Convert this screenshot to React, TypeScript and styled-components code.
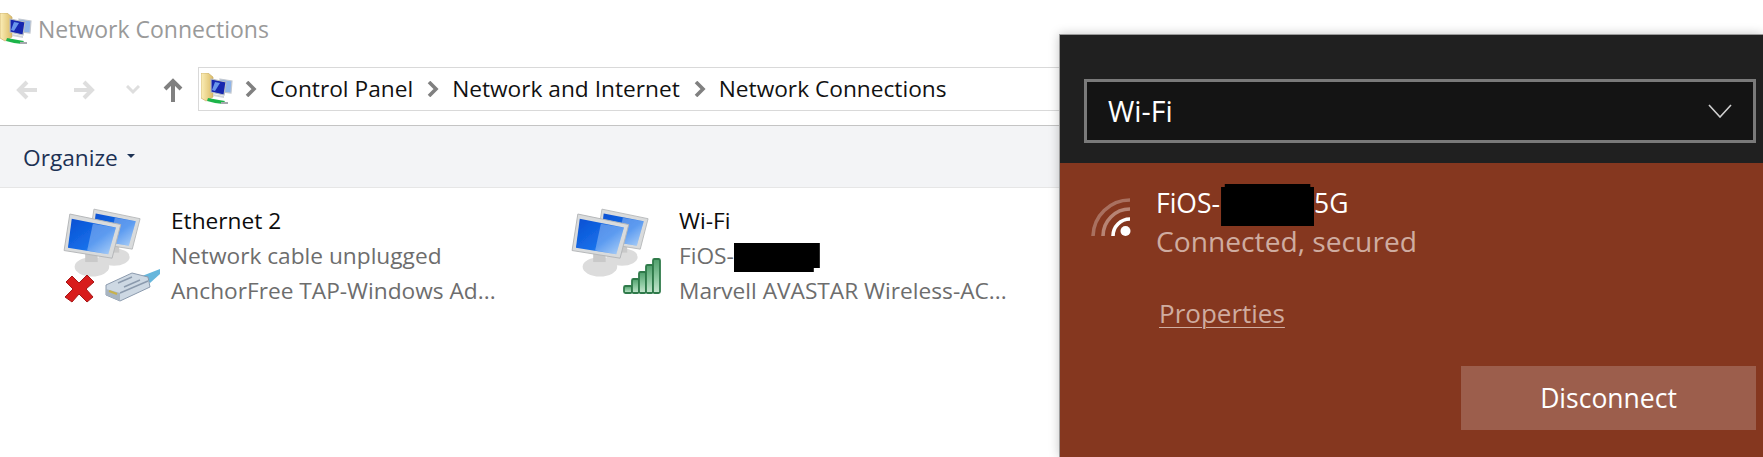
import React from "react";
import styled, { createGlobalStyle } from "styled-components";

const Global = createGlobalStyle`
  html, body { margin: 0; padding: 0; background: #fff; overflow: hidden; }
  #root { width: 1763px; height: 457px; }
`;

const Page = styled.div`
  position: relative;
  width: 1763px;
  height: 457px;
  overflow: hidden;
  background: #fff;
  font-family: "Open Sans", "Noto Sans", sans-serif;
`;

const TitleRow = styled.div`
  display: flex;
  align-items: center;
  height: 57px;
  padding-bottom: 4px;
  color: #9a9a9a;
  font-size: 23px;
  gap: 6px;
`;

const NavRow = styled.div`
  display: flex;
  align-items: center;
  height: 64px;
  border-bottom: 1px solid #c4c4c4;
`;

const NavIcons = styled.div`
  display: flex;
  align-items: center;
  width: 198px;
  flex: none;
  padding: 0 0 7px 15px;
  box-sizing: border-box;
`;

const AddressBar = styled.div`
  display: flex;
  align-items: center;
  height: 44px;
  width: 900px;
  box-sizing: border-box;
  border: 1px solid #d9d9d9;
  padding-left: 2px;
  margin-bottom: 9px;
  color: #111;
  font-size: 22.7px;
`;

const Crumb = styled.span`
  margin: 0 14px 0 13px;
  white-space: nowrap;
`;

const Toolbar = styled.div`
  display: flex;
  align-items: center;
  height: 61px;
  padding: 1px 0 0 23px;
  box-sizing: content-box;
  height: 60px;
  background: #f3f4f6;
  border-bottom: 1px solid #e6e6e6;
  color: #1c3154;
  font-size: 22.7px;
  gap: 9px;
`;

const Caret = styled.span`
  width: 0;
  height: 0;
  margin-top: -3px;
  border-left: 4px solid transparent;
  border-right: 4px solid transparent;
  border-top: 4px solid #1c3154;
`;

const Items = styled.div`
  display: grid;
  grid-template-columns: 508px 508px;
  padding: 15px 0 0 60px;
`;

const Item = styled.div`
  display: flex;
`;

const BigIconBox = styled.div`
  width: 111px;
  height: 110px;
  flex: none;
  margin-top: -2px;
`;

const ItemText = styled.div`
  display: flex;
  flex-direction: column;
`;

const ItemLine = styled.div<{ $primary?: boolean }>`
  height: 35px;
  line-height: 35px;
  font-size: 22.7px;
  white-space: nowrap;
  color: ${(p) => (p.$primary ? "#0c0c0c" : "#6d6d6d")};
`;

const Redaction = styled.span<{ $w: number; $h: number; $clip: string; $v: number; $ml?: number }>`
  display: inline-block;
  width: ${(p) => p.$w}px;
  height: ${(p) => p.$h}px;
  margin-left: ${(p) => p.$ml ?? 0}px;
  vertical-align: ${(p) => p.$v}px;
  background: #000;
  clip-path: ${(p) => p.$clip};
`;

const Flyout = styled.aside`
  position: absolute;
  left: 1059px;
  top: 34px;
  width: 704px;
  height: 423px;
  display: flex;
  flex-direction: column;
  border-left: 1px solid #9a9a9a;
  border-top: 1px solid #9a9a9a;
  box-sizing: border-box;
  box-shadow: 0 0 10px rgba(0, 0, 0, 0.22);
  background: #85371f;
  color: #fff;
`;

const FlyoutHead = styled.div`
  height: 128px;
  flex: none;
  background: #202020;
  padding: 44px 7px 0 24px;
  box-sizing: border-box;
`;

const SelectBox = styled.div`
  display: flex;
  align-items: center;
  justify-content: space-between;
  height: 64px;
  box-sizing: border-box;
  border: 3px solid #7a7a7a;
  background: #141414;
  padding: 0 21px 0 21px;
  font-size: 28.5px;
`;

const Network = styled.div`
  display: flex;
  padding: 19px 0 0 31px;
`;

const SignalBox = styled.div`
  flex: none;
  margin-top: 16px;
  display: flex;
`;

const NetworkText = styled.div`
  display: flex;
  flex-direction: column;
  margin-left: 23px;
`;

const NetworkName = styled.div`
  height: 39px;
  line-height: 42px;
  font-size: 26.5px;
  white-space: nowrap;
`;

const NetworkStatus = styled.div`
  height: 41px;
  line-height: 40px;
  font-size: 28.2px;
  color: #cfaca0;
  white-space: nowrap;
`;

const PropertiesLink = styled.a`
  align-self: flex-start;
  margin: 34px 0 0 99px;
  font-size: 26px;
  line-height: 34px;
  color: #cfaca0;
  text-decoration: underline;
  text-underline-offset: 4px;
  text-decoration-thickness: 1px;
`;

const Footer = styled.div`
  display: flex;
  justify-content: flex-end;
  padding: 36px 7px 0 0;
`;

const DisconnectButton = styled.div`
  display: flex;
  align-items: center;
  justify-content: center;
  width: 295px;
  height: 64px;
  background: #9c5e4c;
  font-size: 26.5px;
`;

const NavSvg = styled.svg<{ $ml?: number }>`
  flex: none;
  display: block;
  margin-left: ${(p) => p.$ml ?? 0}px;
`;

const Arrow = ({ dir, color, ml }: { dir: "l" | "r"; color: string; ml: number }) => (
  <NavSvg $ml={ml} width="23" height="22" viewBox="0 0 23 22">
    <path
      d={dir === "l" ? "M22 11H4M12 3l-8 8 8 8" : "M1 11h18M11 3l8 8-8 8"}
      fill="none"
      stroke={color}
      strokeWidth="4"
    />
  </NavSvg>
);

const Chevron = () => (
  <NavSvg width="12" height="16" viewBox="0 0 12 16">
    <path d="M2 1l7 7-7 7" fill="none" stroke="#808080" strokeWidth="3.6" />
  </NavSvg>
);

const FolderNet = ({ id }: { id: string }) => (
  <NavSvg width="32" height="32" viewBox="0 0 32 32">
    <defs>
      <linearGradient id={id} x1="0" x2="1" y1="0" y2="0">
        <stop offset="0" stopColor="#fbeeb8" />
        <stop offset="1" stopColor="#dcbc66" />
      </linearGradient>
      <filter id={`${id}b`} x="-10%" y="-10%" width="120%" height="120%">
        <feGaussianBlur stdDeviation=".3" />
      </filter>
    </defs>
    <g filter={`url(#${id}b)`}>
      <path d="M0 0h7l5 4v20l-7 4-5-3z" fill={`url(#${id})`} stroke="#c9ae68" strokeWidth=".7" />
      <path d="M19 6l12 2-1 12-9-1z" fill="#8fb5ea" stroke="#c4c9d0" strokeWidth="1.2" />
      <path d="M10 6l15 3-2 13-13-3z" fill="#1427b0" stroke="#b8bdc5" strokeWidth="1.2" />
      <path d="M14 9l5 1-5 8-3-1z" fill="#6a96ec" />
      <path d="M12 21l11 2v2l-11-2z" fill="#cfd3d8" />
      <path d="M7 25l11 2 6 1-2 3-8-1-8-2z" fill="#1fb44a" />
      <path d="M20 29l7 0v2l-7 0z" fill="#a5a9ae" />
    </g>
  </NavSvg>
);

const Monitor = ({ id, x, y, k }: { id: string; x: number; y: number; k: number }) => (
  <g transform={`translate(${x} ${y}) scale(${k})`}>
    <ellipse cx="27" cy="54" rx="18" ry="10" fill="#dcdcdc" />
    <rect x="20" y="38" width="13" height="11" fill="#c9c9c9" />
    <path d="M4 -1 L57 10 L48 45 L-2 37 Z" fill="#d9dbdc" stroke="#b4b6b8" />
    <path d="M6 4 L52 13 L44 41 L2 34 Z" fill={`url(#${id})`} />
    <path d="M28 9 L52 13 L44 41 L22 37 Z" fill="#fff" opacity=".3" />
  </g>
);

const BigMonitors = ({ id }: { id: string }) => (
  <>
    <defs>
      <linearGradient id={id} x1="0" x2="1" y1="0" y2="1">
        <stop offset="0" stopColor="#0a4fd2" />
        <stop offset="0.6" stopColor="#1670ea" />
        <stop offset="1" stopColor="#8fc0f5" />
      </linearGradient>
      <filter id={`${id}b`} x="-10%" y="-10%" width="120%" height="120%">
        <feGaussianBlur stdDeviation=".5" />
      </filter>
    </defs>
    <g filter={`url(#${id}b)`}>
      <Monitor id={id} x={30.5} y={9} k={0.87} />
      <Monitor id={id} x={6} y={14} k={0.96} />
    </g>
  </>
);

const EthernetIcon = () => (
  <NavSvg width="111" height="110" viewBox="0 0 111 110">
    <BigMonitors id="g1" />
    <g filter="url(#g1b)">
      <path
        d="M8 76 L15 83 L23 75 L30 82 L22 89 L29 97 L23 102 L15 94 L8 102 L1 97 L9 89 L2 82 Z"
        transform="translate(4 -1)"
        fill="#d81d1d"
        stroke="#a61616"
      />
      <path d="M82 75 L100 68 L100 73 L90 82 Z" fill="#66b6dc" />
      <path d="M46 84 L72 72 L88 76 L90 86 L60 100 L46 94 Z" fill="#cdd8e3" stroke="#8b9aad" />
      <path d="M46 88 L60 92 L60 100 L46 94 Z" fill="#a7b4c1" />
      <path d="M49 90 L57 93" stroke="#c9b24c" strokeWidth="2" />
      <path d="M58 82 L72 76 M64 86 L80 79 M60 92 L88 80" stroke="#8b9aad" strokeWidth="1.4" />
    </g>
  </NavSvg>
);

const WifiIcon = () => (
  <NavSvg width="111" height="110" viewBox="0 0 111 110">
    <defs>
      <linearGradient id="bar" x1="0" x2="0" y1="0" y2="1">
        <stop offset="0" stopColor="#4f9f6c" />
        <stop offset="0.55" stopColor="#8cc9a0" />
        <stop offset="1" stopColor="#c6e6cf" />
      </linearGradient>
    </defs>
    <BigMonitors id="g2" />
    <g stroke="#2f7a4a" strokeWidth="1.8" fill="url(#bar)">
      <rect x="56" y="85" width="8" height="7" rx="1.5" />
      <rect x="64" y="78" width="7" height="14" rx="1.5" />
      <rect x="71" y="71" width="7" height="21" rx="1.5" />
      <rect x="78" y="64" width="7" height="28" rx="1.5" />
      <rect x="85" y="58" width="7" height="34" rx="1.5" />
    </g>
  </NavSvg>
);

const SignalIcon = () => (
  <NavSvg width="42" height="40" viewBox="0 0 42 40">
    <g fill="none" strokeWidth="3.6">
      <path d="M2 38A37 37 0 0 1 39 2" stroke="#a9705f" />
      <path d="M12 38A27 27 0 0 1 39 11" stroke="#b78474" />
      <path d="M22 38A17 17 0 0 1 39 21" stroke="#fff" />
    </g>
    <circle cx="34.5" cy="33" r="5" fill="#fff" />
  </NavSvg>
);

export default function App() {
  return (
    <Page>
      <Global />
      <TitleRow>
        <FolderNet id="f1" />
        <span>Network Connections</span>
      </TitleRow>
      <NavRow>
        <NavIcons>
          <Arrow dir="l" color="#dedede" ml={0} />
          <Arrow dir="r" color="#dedede" ml={35} />
          <NavSvg $ml={30} width="14" height="10" viewBox="0 0 14 10">
            <path d="M1 1l6 6 6-6" fill="none" stroke="#dedede" strokeWidth="3" />
          </NavSvg>
          <NavSvg $ml={23} width="20" height="24" viewBox="0 0 20 24">
            <path d="M10 24V4M2 11l8-8 8 8" fill="none" stroke="#808080" strokeWidth="4" />
          </NavSvg>
        </NavIcons>
        <AddressBar>
          <FolderNet id="f2" />
          <NavSvg $ml={12} width="12" height="16" viewBox="0 0 12 16">
            <path d="M2 1l7 7-7 7" fill="none" stroke="#808080" strokeWidth="3.6" />
          </NavSvg>
          <Crumb>Control Panel</Crumb>
          <Chevron />
          <Crumb>Network and Internet</Crumb>
          <Chevron />
          <Crumb>Network Connections</Crumb>
        </AddressBar>
      </NavRow>
      <Toolbar>
        <span>Organize</span>
        <Caret />
      </Toolbar>
      <Items>
        <Item>
          <BigIconBox>
            <EthernetIcon />
          </BigIconBox>
          <ItemText>
            <ItemLine $primary>Ethernet 2</ItemLine>
            <ItemLine>Network cable unplugged</ItemLine>
            <ItemLine>AnchorFree TAP-Windows Ad...</ItemLine>
          </ItemText>
        </Item>
        <Item>
          <BigIconBox>
            <WifiIcon />
          </BigIconBox>
          <ItemText>
            <ItemLine $primary>Wi-Fi</ItemLine>
            <ItemLine>
              FiOS-
              <Redaction
                $w={86}
                $h={29}
                $v={-8}
                $clip="polygon(0 0, 100% 0, 100% 86%, 93% 86%, 93% 100%, 0 100%)"
              />
            </ItemLine>
            <ItemLine>Marvell AVASTAR Wireless-AC...</ItemLine>
          </ItemText>
        </Item>
      </Items>
      <Flyout>
        <FlyoutHead>
          <SelectBox>
            <span>Wi-Fi</span>
            <svg width="24" height="14" viewBox="0 0 24 14">
              <path d="M1 1l11 12L23 1" fill="none" stroke="#d0d0d0" strokeWidth="1.6" />
            </svg>
          </SelectBox>
        </FlyoutHead>
        <Network>
          <SignalBox>
            <SignalIcon />
          </SignalBox>
          <NetworkText>
            <NetworkName>
              FiOS-
              <Redaction
                $w={93}
                $h={42}
                $v={-13}
                $ml={1}
                $clip="polygon(4% 0, 96% 0, 96% 7%, 100% 7%, 100% 100%, 0 100%, 0 7%, 4% 7%)"
              />
              5G
            </NetworkName>
            <NetworkStatus>Connected, secured</NetworkStatus>
          </NetworkText>
        </Network>
        <PropertiesLink>Properties</PropertiesLink>
        <Footer>
          <DisconnectButton>Disconnect</DisconnectButton>
        </Footer>
      </Flyout>
    </Page>
  );
}
